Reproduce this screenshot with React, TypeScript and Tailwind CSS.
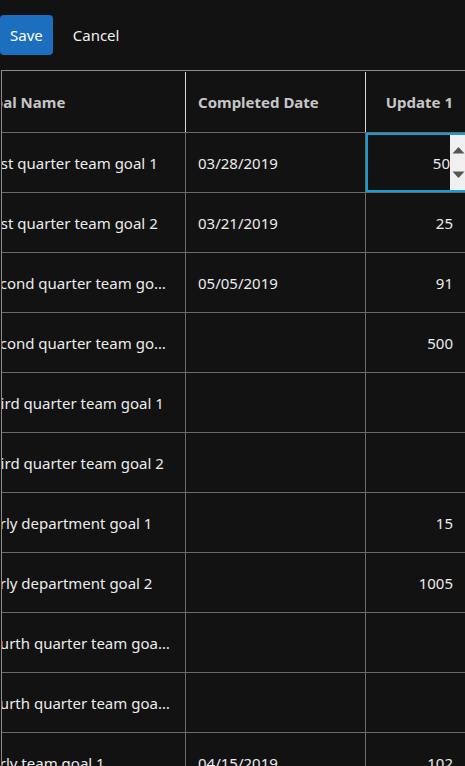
import React from "react";

type Row = { name: string; date: string; update: string };

const rows: Row[] = [
  { name: "First quarter team goal 1", date: "03/28/2019", update: "50" },
  { name: "First quarter team goal 2", date: "03/21/2019", update: "25" },
  { name: "Second quarter team goal 1", date: "05/05/2019", update: "91" },
  { name: "Second quarter team goal 2", date: "", update: "500" },
  { name: "Third quarter team goal 1", date: "", update: "" },
  { name: "Third quarter team goal 2", date: "", update: "" },
  { name: "Early department goal 1", date: "", update: "15" },
  { name: "Early department goal 2", date: "", update: "1005" },
  { name: "Fourth quarter team goal 1", date: "", update: "" },
  { name: "Fourth quarter team goal 2", date: "", update: "" },
  { name: "Early team goal 1", date: "04/15/2019", update: "102" },
];

function Spinner() {
  return (
    <div className="flex h-full w-[16px] shrink-0 flex-col items-start justify-between bg-[#f0f0f0] px-[2px] py-[11px]">
      <svg width="13" height="8" viewBox="0 0 13 8">
        <path d="M0.5 7.5 L6.5 1 L12.5 7.5 Z" fill="#555" />
      </svg>
      <svg width="13" height="8" viewBox="0 0 13 8">
        <path d="M0.5 0.5 L6.5 7 L12.5 0.5 Z" fill="#555" />
      </svg>
    </div>
  );
}

export default function App() {
  return (
    <div
      className="h-[766px] w-[465px] overflow-hidden bg-[#121212] text-[15px]"
      style={{ fontFamily: '"Noto Sans", "Open Sans", sans-serif' }}
    >
      {/* toolbar */}
      <div className="flex h-[70px] items-center gap-5">
        <button className="h-[40px] rounded-[4px] bg-[#1c6fbf] px-[10px] text-white">Save</button>
        <button className="h-[40px] px-0 text-[#f0f0f0]">Cancel</button>
      </div>

      {/* grid, scrolled horizontally */}
      <div className="ml-[1px] overflow-hidden border-l border-t border-[#8a8a8a]">
        <div className="-ml-[31px] w-[700px]">
          {/* header */}
          <div className="flex h-[62px] border-b border-[#6a6a6a] pt-[1px] font-bold text-[#c6c6c6]">
            <div className="flex w-[215px] shrink-0 items-center border-r border-[#d8d8d8] px-3">Goal Name</div>
            <div className="flex w-[180px] shrink-0 items-center border-r border-[#d8d8d8] px-3">Completed Date</div>
            <div className="flex w-[100px] shrink-0 items-center justify-end border-r border-[#d8d8d8] px-3">Update 1</div>
            <div className="flex w-[180px] shrink-0 items-center px-3">Update 2</div>
          </div>
          {rows.map((r, i) => (
            <div key={i} className="flex h-[60px] border-b border-[#6a6a6a] text-[#ececec]">
              <div className="flex w-[215px] shrink-0 items-center border-r border-[#6a6a6a] px-3 pt-[2px]">
                <span className="truncate">{r.name}</span>
              </div>
              <div className="flex w-[180px] shrink-0 items-center border-r border-[#6a6a6a] px-3 pt-[2px]">
                {r.date}
              </div>
              {i === 0 ? (
                <div className="flex w-[100px] shrink-0 items-stretch border-2 border-r-0 border-[#1a9bd6]">
                  <div className="flex flex-1 items-center justify-end pt-[2px]">{r.update}</div>
                  <Spinner />
                </div>
              ) : (
                <div className="flex w-[100px] shrink-0 items-center justify-end border-r border-[#6a6a6a] px-3 pt-[2px]">
                  {r.update}
                </div>
              )}
              <div className="w-[180px] shrink-0" />
            </div>
          ))}
        </div>
      </div>
    </div>
  );
}
